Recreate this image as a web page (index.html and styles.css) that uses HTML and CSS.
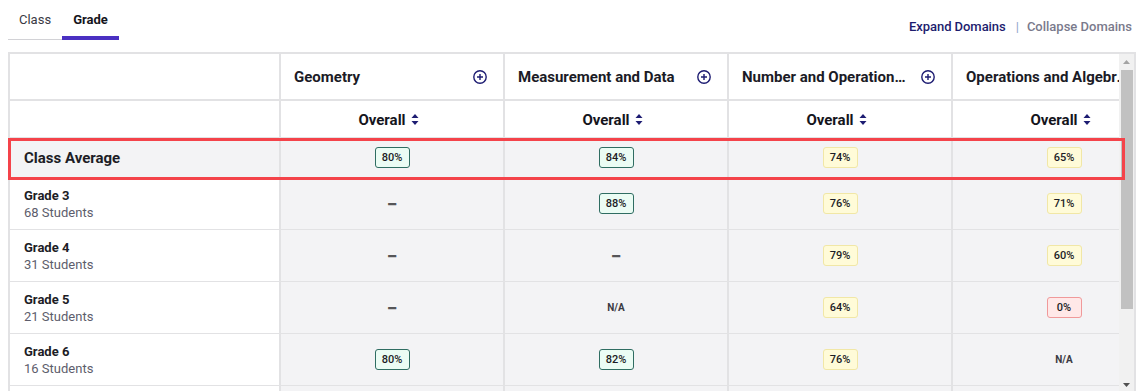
FILE: index.html
```html
<!DOCTYPE html>
<html lang="en">
<head>
<meta charset="utf-8">
<title>Grade Report</title>
<link rel="stylesheet" href="styles.css">
</head>
<body>
<div class="topbar">
  <div class="tabs">
    <div class="tab">Class</div>
    <div class="tab active">Grade</div>
  </div>
  <div class="domain-links">
    <span class="expand">Expand Domains</span>
    <span class="sep">|</span>
    <span class="collapse">Collapse Domains</span>
  </div>
</div>

<div class="table-wrap">
  <div class="scroller">
    <div class="row head1">
      <div class="cell first"></div>
      <div class="cell domain"><span class="title">Geometry</span><svg class="plus" viewBox="0 0 14 14"><circle cx="7" cy="7" r="6.2"/><path d="M7 4v6M4 7h6"/></svg></div>
      <div class="cell domain"><span class="title">Measurement and Data</span><svg class="plus" viewBox="0 0 14 14"><circle cx="7" cy="7" r="6.2"/><path d="M7 4v6M4 7h6"/></svg></div>
      <div class="cell domain"><span class="title">Number and Operations in Base Ten</span><svg class="plus" viewBox="0 0 14 14"><circle cx="7" cy="7" r="6.2"/><path d="M7 4v6M4 7h6"/></svg></div>
      <div class="cell domain"><span class="title">Operations and Algebraic Thinking</span><svg class="plus" viewBox="0 0 14 14"><circle cx="7" cy="7" r="6.2"/><path d="M7 4v6M4 7h6"/></svg></div>
    </div>
    <div class="row head2">
      <div class="cell first"></div>
      <div class="cell sort">Overall<svg class="sort-icon" viewBox="0 0 8 11"><path d="M4 0L7.5 4H0.5Z M4 11L7.5 7H0.5Z"/></svg></div>
      <div class="cell sort">Overall<svg class="sort-icon" viewBox="0 0 8 11"><path d="M4 0L7.5 4H0.5Z M4 11L7.5 7H0.5Z"/></svg></div>
      <div class="cell sort">Overall<svg class="sort-icon" viewBox="0 0 8 11"><path d="M4 0L7.5 4H0.5Z M4 11L7.5 7H0.5Z"/></svg></div>
      <div class="cell sort">Overall<svg class="sort-icon" viewBox="0 0 8 11"><path d="M4 0L7.5 4H0.5Z M4 11L7.5 7H0.5Z"/></svg></div>
    </div>
    <div class="row avg">
      <div class="cell first"><span class="avg-label">Class Average</span></div>
      <div class="cell data"><span class="badge green">80%</span></div>
      <div class="cell data"><span class="badge green">84%</span></div>
      <div class="cell data"><span class="badge yellow">74%</span></div>
      <div class="cell data"><span class="badge yellow">65%</span></div>
    </div>
    <div class="row grade">
      <div class="cell first"><span class="g-name">Grade 3</span><span class="g-count">68 Students</span></div>
      <div class="cell data"><span class="dash">—</span></div>
      <div class="cell data"><span class="badge green">88%</span></div>
      <div class="cell data"><span class="badge yellow">76%</span></div>
      <div class="cell data"><span class="badge yellow">71%</span></div>
    </div>
    <div class="row grade">
      <div class="cell first"><span class="g-name">Grade 4</span><span class="g-count">31 Students</span></div>
      <div class="cell data"><span class="dash">—</span></div>
      <div class="cell data"><span class="dash">—</span></div>
      <div class="cell data"><span class="badge yellow">79%</span></div>
      <div class="cell data"><span class="badge yellow">60%</span></div>
    </div>
    <div class="row grade">
      <div class="cell first"><span class="g-name">Grade 5</span><span class="g-count">21 Students</span></div>
      <div class="cell data"><span class="dash">—</span></div>
      <div class="cell data"><span class="na">N/A</span></div>
      <div class="cell data"><span class="badge yellow">64%</span></div>
      <div class="cell data"><span class="badge red">0%</span></div>
    </div>
    <div class="row grade">
      <div class="cell first"><span class="g-name">Grade 6</span><span class="g-count">16 Students</span></div>
      <div class="cell data"><span class="badge green">80%</span></div>
      <div class="cell data"><span class="badge green">82%</span></div>
      <div class="cell data"><span class="badge yellow">76%</span></div>
      <div class="cell data"><span class="na">N/A</span></div>
    </div>
    <div class="row grade">
      <div class="cell first"><span class="g-name">Grade 7</span><span class="g-count">12 Students</span></div>
      <div class="cell data"><span class="dash">—</span></div>
      <div class="cell data"><span class="badge yellow">72%</span></div>
      <div class="cell data"><span class="badge yellow">70%</span></div>
      <div class="cell data"><span class="badge yellow">66%</span></div>
    </div>
  </div>
  <div class="vscroll" aria-hidden="true">
    <span class="sb-btn"><svg viewBox="0 0 7 4"><path class="up" d="M3.5 0L7 4H0Z"/></svg></span>
    <span class="sb-thumb"></span>
    <span class="sb-track"></span>
    <span class="sb-btn"><svg viewBox="0 0 7 4"><path class="down" d="M0 0H7L3.5 4Z"/></svg></span>
  </div>
  <div class="highlight"></div>
</div>
</body>
</html>
```

FILE: styles.css
```css
* { box-sizing: border-box; }

body {
  margin: 8px;
  font-family: Roboto, "Liberation Sans", Arial, sans-serif;
  color: #1d1d26;
  background: #ffffff;
}

.topbar {
  display: flex;
  justify-content: space-between;
  align-items: flex-start;
  height: 32px;
  margin-bottom: 12px;
}

.tabs {
  display: flex;
}

.tab {
  height: 32px;
  padding: 4px 11px 0;
  font-size: 13px;
  line-height: 16px;
  color: #3a3a44;
  border-bottom: 1px solid #d2d2d6;
}

.tab.active {
  font-weight: 700;
  color: #15151c;
  border-bottom: 4px solid #4a30c2;
}

.domain-links {
  display: flex;
  gap: 8px;
  padding-top: 11px;
  padding-right: 4px;
  font-size: 13px;
  line-height: 16px;
  font-weight: 500;
}

.expand { color: #1d1c6e; letter-spacing: -0.05px; }
.sep { color: #8ea3cc; font-weight: 400; margin-left: 2px; }
.collapse { color: #7a7a8c; }

.table-wrap {
  position: relative;
  display: flex;
  border: 2px solid #e2e2e4;
}

.scroller {
  flex: 1;
  min-width: 0;
  height: 338px;
  overflow: hidden;
}

.vscroll {
  flex: none;
  width: 15px;
  height: 338px;
  display: flex;
  flex-direction: column;
  background: #f1f1f1;
}

.sb-btn {
  flex: none;
  height: 15px;
  display: flex;
  align-items: center;
  justify-content: center;
}

.sb-btn svg {
  width: 7px;
  height: 4px;
}

.sb-btn .up { fill: #a3a3a3; }
.sb-btn .down { fill: #505050; }

.sb-thumb {
  flex: none;
  height: 239px;
  margin: 1px 1px 0 2px;
  background: #c1c1c1;
}

.sb-track {
  flex: 1;
}

.row {
  display: grid;
  grid-template-columns: 271px repeat(4, 224px);
  width: max-content;
}

.cell {
  border-right: 2px solid #e2e2e4;
  display: flex;
  align-items: center;
  min-width: 0;
}

.head1 .cell {
  height: 47px;
  border-bottom: 2px solid #e2e2e4;
  background: #ffffff;
}

.domain {
  padding: 1px 16px 0 13px;
  justify-content: space-between;
}

.title {
  flex: 1;
  min-width: 0;
  margin-right: 10px;
  font-size: 15px;
  font-weight: 700;
  white-space: nowrap;
  overflow: hidden;
  text-overflow: ellipsis;
  color: #1b1b26;
}

.plus {
  width: 14px;
  height: 14px;
  flex: none;
  fill: none;
  stroke: #1d1c72;
  stroke-width: 1.4;
}

.head2 .cell {
  height: 37px;
  border-bottom: 1px solid #e2e2e4;
  background: #ffffff;
}

.sort {
  justify-content: center;
  padding: 1px 7px 0 0;
  font-size: 15px;
  font-weight: 700;
  color: #15151c;
}

.sort-icon {
  width: 8px;
  height: 11px;
  margin-left: 5px;
  fill: #1d1c72;
}

.avg .cell {
  height: 40px;
  border-bottom: 1px solid #e2e2e4;
  background: #f3f3f5;
}

.avg-label {
  padding-left: 14px;
  padding-top: 1px;
  font-size: 15px;
  font-weight: 700;
  color: #1d1d26;
}

.grade .cell {
  height: 52px;
  border-bottom: 1px solid #e2e2e4;
  background: #f3f3f5;
}

.grade .cell.first {
  background: #ffffff;
  flex-direction: column;
  align-items: flex-start;
  justify-content: center;
  padding-left: 14px;
  padding-top: 1px;
}

.g-name {
  font-size: 13px;
  line-height: 16px;
  font-weight: 700;
  color: #1d1d26;
}

.g-count {
  font-size: 13px;
  line-height: 17px;
  color: #5d5d6c;
}

.data {
  justify-content: center;
}

.badge {
  width: 35px;
  height: 21px;
  border: 1px solid;
  border-radius: 3px;
  display: flex;
  align-items: center;
  justify-content: center;
  font-size: 11px;
  font-weight: 500;
  color: #1d1d26;
}

.badge.green { border-color: #2f6d62; background: #ebfcf4; }
.badge.yellow { border-color: #f1e7a6; background: #fffbd8; }
.badge.red { border-color: #f0999a; background: #ffe8e8; }

.dash {
  font-size: 12px;
  font-weight: 700;
  color: #555558;
  text-shadow: 0 1px 0 #555558;
}

.na {
  font-size: 10px;
  font-weight: 700;
  color: #3a3a42;
}

.highlight {
  position: absolute;
  left: -2px;
  top: 84px;
  width: 1117px;
  height: 42px;
  border: 3px solid #f4434a;
  pointer-events: none;
}
```
